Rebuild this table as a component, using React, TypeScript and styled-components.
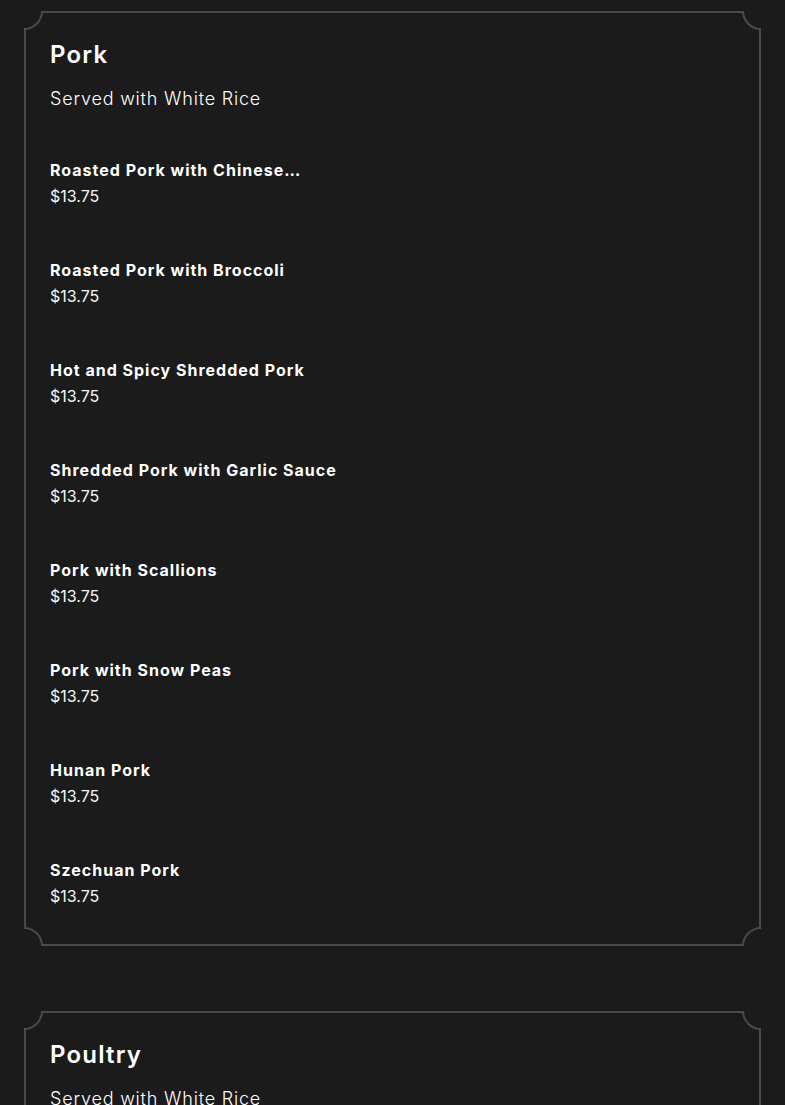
import React from "react";
import styled, { createGlobalStyle } from "styled-components";

const PAGE_BG = "#1b1b1b";
const LINE = "#4a4a4a";
const R = 19;

const Global = createGlobalStyle`
  html, body { margin: 0; padding: 0; background: ${PAGE_BG}; }
  body { font-family: Inter, "Noto Sans", sans-serif; color: #ffffff; }
  * { box-sizing: border-box; }
`;

const Page = styled.main`
  display: flex;
  flex-direction: column;
  gap: 65px;
  padding: 11px 24px 40px;
`;

const Card = styled.section`
  position: relative;
  border: 2px solid ${LINE};
  padding: 26px 24px 11px;
  background: ${PAGE_BG};
`;

type CornerPos = "tl" | "tr" | "bl" | "br";

const Corner = styled.span<{ $pos: CornerPos }>`
  position: absolute;
  width: ${R * 2}px;
  height: ${R * 2}px;
  border-radius: 50%;
  border: 2px solid ${LINE};
  background: ${PAGE_BG};
  ${({ $pos }) => ($pos[0] === "t" ? `top: ${-2 - R}px;` : `bottom: ${-2 - R}px;`)}
  ${({ $pos }) => ($pos[1] === "l" ? `left: ${-2 - R}px;` : `right: ${-2 - R}px;`)}
  clip-path: ${({ $pos }) =>
    $pos === "tl"
      ? `inset(${R}px 0 0 ${R}px)`
      : $pos === "tr"
      ? `inset(${R}px ${R}px 0 0)`
      : $pos === "bl"
      ? `inset(0 0 ${R}px ${R}px)`
      : `inset(0 ${R}px ${R}px 0)`};
`;

const Title = styled.h2`
  margin: 0;
  font-size: 24px;
  line-height: 32px;
  font-weight: 600;
  letter-spacing: 1.2px;
  color: #ffffff;
`;

const Subtitle = styled.p`
  margin: 14px 0 0;
  font-size: 18px;
  line-height: 27px;
  font-weight: 300;
  letter-spacing: 0.8px;
  color: #ffffff;
`;

const ItemList = styled.ul`
  list-style: none;
  margin: 21px 0 0;
  padding: 0;
  display: flex;
  flex-direction: column;
`;

const Item = styled.li`
  display: flex;
  flex-direction: column;
  gap: 2px;
  padding: 25px 0;
`;

const ItemName = styled.span`
  font-size: 16px;
  line-height: 24px;
  font-weight: 700;
  letter-spacing: 1px;
  color: #ffffff;
`;

const ItemPrice = styled.span`
  font-size: 16px;
  line-height: 24px;
  font-weight: 400;
  color: #f6f6f6;
`;

type Section = { title: string; subtitle: string; items: { name: string; price: string }[] };

const sections: Section[] = [
  {
    title: "Pork",
    subtitle: "Served with White Rice",
    items: [
      { name: "Roasted Pork with Chinese\u2026", price: "$13.75" },
      { name: "Roasted Pork with Broccoli", price: "$13.75" },
      { name: "Hot and Spicy Shredded Pork", price: "$13.75" },
      { name: "Shredded Pork with Garlic Sauce", price: "$13.75" },
      { name: "Pork with Scallions", price: "$13.75" },
      { name: "Pork with Snow Peas", price: "$13.75" },
      { name: "Hunan Pork", price: "$13.75" },
      { name: "Szechuan Pork", price: "$13.75" },
    ],
  },
  {
    title: "Poultry",
    subtitle: "Served with White Rice",
    items: [
      { name: "Chicken with Broccoli", price: "$13.75" },
      { name: "Chicken with Snow Peas", price: "$13.75" },
    ],
  },
];

const corners: CornerPos[] = ["tl", "tr", "bl", "br"];

export default function App() {
  return (
    <>
      <Global />
      <Page>
        {sections.map((s) => (
          <Card key={s.title}>
            {corners.map((c) => (
              <Corner key={c} $pos={c} />
            ))}
            <Title>{s.title}</Title>
            <Subtitle>{s.subtitle}</Subtitle>
            <ItemList>
              {s.items.map((it) => (
                <Item key={it.name}>
                  <ItemName>{it.name}</ItemName>
                  <ItemPrice>{it.price}</ItemPrice>
                </Item>
              ))}
            </ItemList>
          </Card>
        ))}
      </Page>
    </>
  );
}
